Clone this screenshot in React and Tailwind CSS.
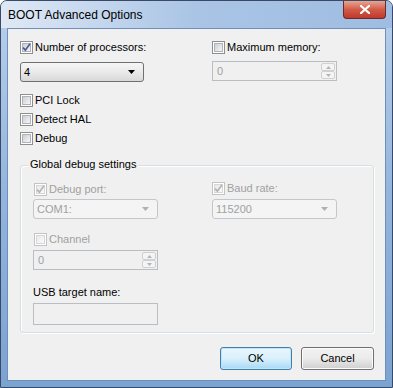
import React from "react";

const FONT = { fontFamily: '"Liberation Sans", Arial, sans-serif' };

function Check({ checked, disabled }) {
  return (
    <span
      className={
        disabled
          ? "w-[13px] h-[13px] border border-[#c4c4c4] bg-white p-px flex shrink-0"
          : "w-[13px] h-[13px] border border-[#8e8f8f] bg-white p-px flex shrink-0"
      }
    >
      <span
        className={
          disabled
            ? "relative flex-1 border border-[#d6d6d6] bg-gradient-to-br from-[#e9e9e9] to-[#fbfbfb]"
            : "relative flex-1 border border-[#aeb3b9] bg-gradient-to-br from-[#cbcfd5] to-[#f6f6f6]"
        }
      >
        {checked && (
          <svg viewBox="0 0 9 9" className="absolute left-[-1px] top-[-1px] w-[9px] h-[9px] overflow-visible">
            <path
              d="M1 4.6 L3.4 7.2 L8 0.8"
              fill="none"
              stroke={disabled ? "#b4b4b4" : "#4a5f97"}
              strokeWidth="1.7"
            />
          </svg>
        )}
      </span>
    </span>
  );
}

function CheckRow({ label, checked, disabled }) {
  return (
    <div className="flex items-center h-[13px] gap-[2px]">
      <Check checked={checked} disabled={disabled} />
      <span className={disabled ? "text-[#a0a0a0] leading-none" : "text-black leading-none"}>{label}</span>
    </div>
  );
}

function Arrow({ color }) {
  return (
    <svg viewBox="0 0 7 4" className="w-[7px] h-[4px]">
      <polygon points="0,0 7,0 3.5,4" fill={color} />
    </svg>
  );
}

function Combo({ value, width, disabled }) {
  return (
    <div
      className={
        disabled
          ? "h-[20px] rounded-[3px] border border-[#c2c7cb] bg-[#f4f4f4] flex items-center pl-[3px] pr-[8px]"
          : "h-[20px] rounded-[3px] border border-[#707070] bg-gradient-to-b from-[#f6f6f6] via-[#eaeaea] to-[#d9d9d9] flex items-center pl-[3px] pr-[8px]"
      }
      style={{ width }}
    >
      <span className={disabled ? "flex-1 text-[#a0a0a0]" : "flex-1 text-black"}>{value}</span>
      <Arrow color={disabled ? "#b0b0b0" : "#000"} />
    </div>
  );
}

function SpinBtn({ up }) {
  return (
    <div className="flex-1 border border-[#d0d0d0] rounded-[2px] bg-[#f4f4f4] flex items-center justify-center">
      <svg viewBox="0 0 5 3" className="w-[5px] h-[3px]">
        <polygon points={up ? "0,3 5,3 2.5,0" : "0,0 5,0 2.5,3"} fill="#b4b4b4" />
      </svg>
    </div>
  );
}

function Spinner({ width }) {
  return (
    <div
      className="h-[20px] border border-[#b8bec3] bg-[#f0f0f0] flex items-stretch pl-[4px]"
      style={{ width }}
    >
      <span className="flex-1 self-center text-[#a0a0a0]">0</span>
      <div className="w-[16px] flex flex-col p-px">
        <SpinBtn up />
        <SpinBtn />
      </div>
    </div>
  );
}

function Button({ children, primary }) {
  return (
    <div
      className={
        primary
          ? "w-[72px] h-[23px] rounded-[3px] border border-[#3c7fb1] bg-gradient-to-b from-[#eaf6fd] via-[#d9f0fc] to-[#a7d9f5] shadow-[inset_0_0_0_1px_#c4e5f6] flex items-center justify-center"
          : "w-[73px] h-[23px] rounded-[3px] border border-[#707070] bg-gradient-to-b from-[#f2f2f2] via-[#ebebeb] to-[#cfcfcf] shadow-[inset_0_0_0_1px_#fcfcfc] flex items-center justify-center"
      }
    >
      {children}
    </div>
  );
}

export default function App() {
  return (
    <div
      className="w-[393px] h-[388px] text-[11px] rounded-t-[7px] border border-[#3a4a66] bg-gradient-to-b from-[#b8d0ec] via-[#93b5dd] to-[#7ba3d2] flex flex-col overflow-hidden"
      style={FONT}
    >
      {/* title bar */}
      <div className="h-[27px] flex items-start shrink-0 bg-gradient-to-r from-[#dfe9f5] via-[#a9c4e5] to-[#9fbde2]">
        <span className="pl-[7px] pt-[5px] text-[12px] text-black">BOOT Advanced Options</span>
        <div className="flex-1" />
        <div className="mr-[6px] w-[43px] h-[18px] rounded-b-[4px] border border-t-0 border-[#6d2a2a] bg-gradient-to-b from-[#e7a593] via-[#d25a48] to-[#c0392b] flex items-center justify-center">
          <svg viewBox="0 0 10 9" className="w-[10px] h-[9px]">
            <path d="M1 1 L9 8 M9 1 L1 8" stroke="#fff" strokeWidth="2.2" strokeLinecap="square" />
          </svg>
        </div>
      </div>

      {/* client */}
      <div className="mx-[6px] mb-[6px] flex-1 border border-[#6f8fb8] bg-[#f0f0f0] text-black pl-[12px] pt-[12px] pr-[11px] flex flex-col">
        <div className="flex">
          <div className="w-[192px] flex flex-col gap-[8px]">
            <CheckRow label="Number of processors:" checked />
            <Combo value="4" width={124} />
          </div>
          <div className="flex flex-col gap-[7px]">
            <CheckRow label="Maximum memory:" />
            <Spinner width={125} />
          </div>
        </div>

        <div className="mt-[12px] flex flex-col gap-[6px]">
          <CheckRow label="PCI Lock" />
          <CheckRow label="Detect HAL" />
          <CheckRow label="Debug" />
        </div>

        {/* group box */}
        <div className="mt-[20px] w-[354px] h-[168px] border border-[#d5dfe5] rounded-[3px] shadow-[inset_1px_1px_0_#fff,1px_1px_0_#fff] pl-[12px] flex flex-col">
          <span className="-mt-[7px] ml-[-5px] px-[2px] self-start bg-[#f0f0f0] leading-none">Global debug settings</span>
          <div className="mt-[13px] flex">
            <div className="w-[179px] flex flex-col gap-[3px]">
              <div className="pl-px"><CheckRow label="Debug port:" checked disabled /></div>
              <Combo value="COM1:" width={125} disabled />
            </div>
            <div className="-mt-px flex flex-col gap-[4px]">
              <CheckRow label="Baud rate:" checked disabled />
              <Combo value="115200" width={125} disabled />
            </div>
          </div>
          <div className="mt-[14px] flex flex-col gap-[4px]">
            <div className="pl-px"><CheckRow label="Channel" disabled /></div>
            <Spinner width={125} />
          </div>
          <span className="mt-[17px] leading-none">USB target name:</span>
          <div className="mt-[5px] w-[125px] h-[22px] border border-[#b8bec3] bg-[#f0f0f0]" />
        </div>

        <div className="mt-[14px] flex justify-end gap-[9px]">
          <Button primary>OK</Button>
          <Button>Cancel</Button>
        </div>
      </div>
    </div>
  );
}
